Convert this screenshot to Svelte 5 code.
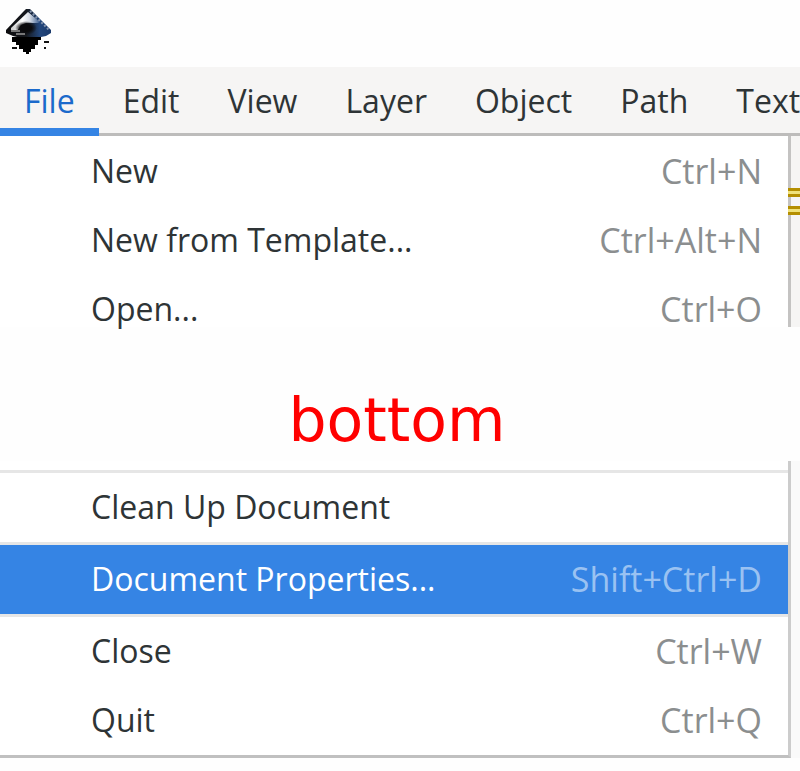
<script>
	const menus = ['File', 'Edit', 'View', 'Layer', 'Object', 'Path', 'Text'];

	const topItems = [
		{ label: 'New', keys: 'Ctrl+N' },
		{ label: 'New from Template...', keys: 'Ctrl+Alt+N' },
		{ label: 'Open...', keys: 'Ctrl+O' }
	];

	const bottomGroups = [
		[{ label: 'Clean Up Document', keys: '' }],
		[{ label: 'Document Properties...', keys: 'Shift+Ctrl+D' }],
		[
			{ label: 'Close', keys: 'Ctrl+W' },
			{ label: 'Quit', keys: 'Ctrl+Q' }
		]
	];

	let activeMenu = $state('File');
	let selected = $state('Document Properties...');
</script>

{#snippet row(item)}
	<button class="item" class:selected={selected === item.label} role="menuitem" onclick={() => (selected = item.label)}>
		<span>{item.label}</span>
		{#if item.keys}
			<span class="keys">{item.keys}</span>
		{/if}
	</button>
{/snippet}

<div class="window">
	<header>
		<svg class="logo" viewBox="0 0 46 46" aria-hidden="true">
			<defs>
				<linearGradient id="ink" x1="0" y1="0" x2="1" y2="0">
					<stop offset="0" stop-color="#0c0c0e" />
					<stop offset="0.45" stop-color="#15181d" />
					<stop offset="0.75" stop-color="#23477c" />
					<stop offset="1" stop-color="#1a3a6c" />
				</linearGradient>
				<linearGradient id="snow" x1="0" y1="0" x2="1" y2="0">
					<stop offset="0" stop-color="#ccc" />
					<stop offset="0.4" stop-color="#fff" />
					<stop offset="0.65" stop-color="#d4dae3" />
					<stop offset="1" stop-color="#34588d" />
				</linearGradient>
				<radialGradient id="shadow">
					<stop offset="0.5" stop-color="#0a0a0c" />
					<stop offset="1" stop-color="#0a0a0c" stop-opacity="0" />
				</radialGradient>
			</defs>
			<path d="M20 1h4l3 3 18 18v3l-5 3-10 2H15l-8-2-7-3v-3L17 4z" fill="url(#ink)" />
			<path d="M22 4 5 20v2l6 1 4-6 5-2h12l2-1z" fill="url(#snow)" />
			<path d="M24 3 43 22" stroke="#8796ae" stroke-width="2" stroke-dasharray="2 2" />
			<ellipse cx="20" cy="20" rx="11" ry="7" fill="url(#shadow)" />
			<path d="M5 23h9M10 26h9" stroke="#777" stroke-width="2" />
			<path d="M6 29h29v3h-3v5h-3v4h-4v3h-2v2h-3v-2h-3v-3h-4v-4h-3v-3h-4v-2H6z" fill="#000" />
			<path d="M6 40h5M38 34h5M38 40h2" stroke="#111" stroke-width="2" />
		</svg>
	</header>

	<nav class="menubar" role="menubar">
		{#each menus as name}
			<button class="tab" class:active={activeMenu === name} role="menuitem" onclick={() => (activeMenu = name)}>{name}</button>
		{/each}
	</nav>

	<div class="section">
		<div class="menu start" role="menu">
			{#each topItems as item}
				{@render row(item)}
			{/each}
		</div>
		<div class="canvas">
			<i class="guide"></i>
			<i class="guide"></i>
		</div>
	</div>

	<p class="caption">bottom</p>

	<div class="section">
		<div class="menu end" role="menu">
			{#each bottomGroups as group}
				<hr />
				{#each group as item}
					{@render row(item)}
				{/each}
			{/each}
		</div>
		<div class="shade"></div>
	</div>
</div>

<style>
	:global(body) {
		margin: 0;
		background: #fefefe;
	}

	.window {
		font-family: "Open Sans", "Noto Sans", sans-serif;
		font-size: 32px;
		line-height: 32px;
		color: #2e3436;
		overflow: hidden;
	}

	header {
		height: 59px;
		padding: 8px 6px 0;
	}

	.logo {
		display: block;
		width: 46px;
		height: 46px;
	}

	button {
		border: 0;
		background: none;
		font: inherit;
		color: inherit;
		white-space: nowrap;
		cursor: default;
	}

	.menubar {
		display: flex;
		height: 69px;
		background: linear-gradient(#bdbcbb, #bdbcbb) bottom / 100% 3px no-repeat #f6f5f4;
	}

	.tab {
		flex: none;
		box-sizing: border-box;
		padding: 0 24px 2px;
	}

	.tab.active {
		color: #1b6acb;
		border-bottom: 8px solid #3584e4;
		padding-top: 8px;
	}

	.section {
		display: grid;
		grid-template-columns: 1fr 9px;
	}

	.menu {
		border-right: 3px solid #c4c3c2;
		background: #fff;
		padding-top: 1px;
	}

	.end {
		border-color: #ccc;
		border-bottom: 3px solid #c0c0c0;
		padding-top: 9px;
	}

	.item {
		display: flex;
		align-items: flex-start;
		justify-content: space-between;
		width: 100%;
		height: 69px;
		padding: 18px 26px 0 91px;
	}

	/* the menu is torn off right below its last row */
	.start .item:last-child {
		height: 52px;
	}

	.keys {
		font-size: 34px;
		color: #8b8e8f;
	}

	.item.selected {
		background: #3584e4;
		color: #fff;
	}

	.selected .keys {
		color: #9ac2f2;
	}

	hr {
		height: 3px;
		margin: 0;
		border: 0;
		background: #e6e6e6;
	}

	.canvas {
		background: #f6f5f4;
		padding-top: 52px;
	}

	.guide {
		display: block;
		height: 3px;
		margin: 0 0 9px -3px;
		background: #f0e27a;
		border: solid #b58f00;
		border-width: 3px 0;
	}

	.shade {
		background: #fafafa;
	}

	.caption {
		margin: 0;
		height: 134px;
		padding-right: 6px;
		font-family: "DejaVu Sans", sans-serif;
		font-size: 60px;
		line-height: 186px;
		text-align: center;
		color: #f00;
	}
</style>
